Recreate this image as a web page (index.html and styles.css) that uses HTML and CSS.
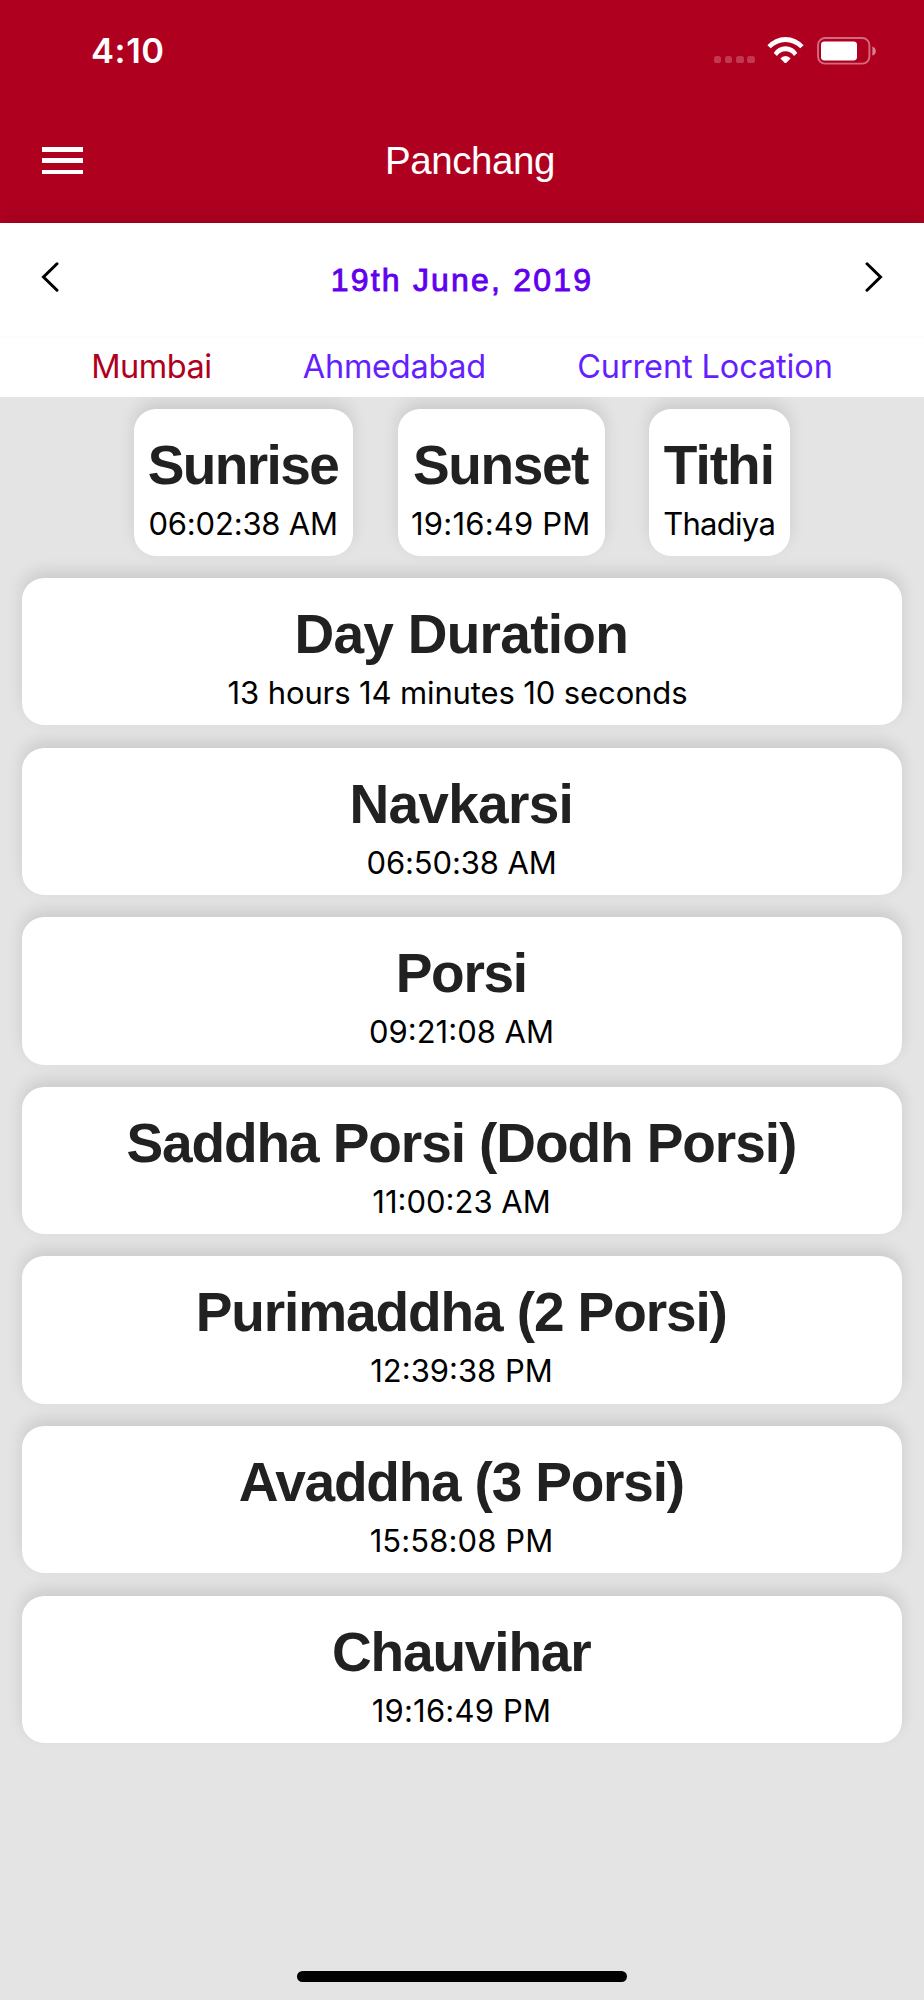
FILE: index.html
```html
<!DOCTYPE html>
<html lang="en">
<head>
<meta charset="utf-8">
<title>Panchang</title>
<link rel="stylesheet" href="styles.css">
</head>
<body>
<div class="screen">
  <header class="top">
    <div class="status">
      <span class="clock">4:10</span>
      <div class="indicators">
        <div class="signal"><i></i><i></i><i></i><i></i></div>
        <svg class="wifi" viewBox="0 0 111 80" fill="#fff">
          <path d="M1 25A72 72 0 0 1 110 25L100 34A61.6 61.6 0 0 0 11 34Z"/>
          <path d="M20 48A41.5 41.5 0 0 1 91 48L81 57A30 30 0 0 0 30 57Z"/>
          <path d="M40 65A19 19 0 0 1 71 65L55.5 80Z"/>
        </svg>
        <svg class="battery" viewBox="0 0 60 28">
          <rect x="1" y="1" width="51.4" height="25.6" rx="7" fill="none" stroke="#fff" stroke-opacity=".42" stroke-width="1.9"/>
          <rect x="4" y="4.4" width="36" height="19" rx="3.4" fill="#fff"/>
          <path d="M55.4 9.4Q58.8 10.4 58.8 14T55.4 18.6Z" fill="#fff" fill-opacity=".5"/>
        </svg>
      </div>
    </div>
    <div class="bar">
      <div class="menu"><i></i><i></i><i></i></div>
      <h1 class="bar-title">Panchang</h1>
    </div>
  </header>
  <div class="date-row">
    <svg class="chevron" viewBox="0 0 18 30"><path d="M16 1.8L2.5 15L16 28.2"/></svg>
    <span class="date">19th June, 2019</span>
    <svg class="chevron" viewBox="0 0 18 30"><path d="M2 1.8L15.5 15L2 28.2"/></svg>
  </div>
  <nav class="tabs">
    <span class="tab active mumbai">Mumbai</span>
    <span class="tab ahmedabad">Ahmedabad</span>
    <span class="tab current">Current Location</span>
  </nav>
  <main class="content">
    <div class="trio">
      <section class="card sunrise"><h2>Sunrise</h2><p>06:02:38 AM</p></section>
      <section class="card sunset"><h2>Sunset</h2><p>19:16:49 PM</p></section>
      <section class="card tithi"><h2>Tithi</h2><p>Thadiya</p></section>
    </div>
    <section class="card duration"><h2>Day Duration</h2><p>13 hours 14 minutes 10 seconds</p></section>
    <section class="card navkarsi"><h2>Navkarsi</h2><p>06:50:38 AM</p></section>
    <section class="card porsi"><h2>Porsi</h2><p>09:21:08 AM</p></section>
    <section class="card saddha"><h2>Saddha Porsi (Dodh Porsi)</h2><p>11:00:23 AM</p></section>
    <section class="card purimaddha"><h2>Purimaddha (2 Porsi)</h2><p>12:39:38 PM</p></section>
    <section class="card avaddha"><h2>Avaddha (3 Porsi)</h2><p>15:58:08 PM</p></section>
    <section class="card chauvihar"><h2>Chauvihar</h2><p>19:16:49 PM</p></section>
    <div class="home"></div>
  </main>
</div>
</body>
</html>
```

FILE: styles.css
```css
* { box-sizing: border-box; }
body { margin: 0; font-family: Inter, sans-serif; color: #000; }
h1, h2, p { margin: 0; }

.screen { width: 924px; height: 2000px; display: flex; flex-direction: column; background: #e4e4e4; overflow: hidden; }

.top { height: 223.3px; background: #b00020; color: #fff; }
.status { height: 100px; display: flex; justify-content: space-between; align-items: flex-start; padding: 30px 47.5px 0 91px; }
.clock { font-size: 34.5px; font-weight: 600; line-height: 42px; letter-spacing: .6px; }
.indicators { display: flex; align-items: flex-start; padding-top: 6.5px; }
.signal { display: flex; gap: 3.6px; padding-top: 19.5px; margin-right: 12.5px; }
.signal i { width: 7.6px; height: 7.4px; border-radius: 2.6px; background: rgba(255, 255, 255, .22); }
.wifi { width: 37px; height: 26.6px; margin-right: 12.3px; }
.battery { width: 60px; height: 28px; }

.bar { height: 123.3px; display: grid; grid-template-columns: 116px 1fr 100px; align-items: start; }
.menu { display: flex; flex-direction: column; gap: 6.7px; padding: 47px 0 0 42.3px; }
.menu i { width: 40.7px; height: 4.6px; background: #fff; }
.bar-title { font: 400 38.5px/44px "Liberation Sans", sans-serif; letter-spacing: -.4px; text-align: center; padding-top: 39px; }

.date-row { position: relative; height: 112.7px; display: flex; justify-content: space-between; align-items: flex-start; padding: 38.5px 41px 0; background: #fff; box-shadow: 0 -7px 16px rgba(0, 0, 0, .11); }
.chevron { width: 18px; height: 30px; fill: none; stroke: #000; stroke-width: 3; stroke-linecap: round; }
.date { font: 400 32px/36px "Liberation Sans", sans-serif; letter-spacing: 2.2px; color: #6200ee; -webkit-text-stroke: .9px #6200ee; }

.tabs { position: relative; z-index: 1; height: 61.3px; display: flex; justify-content: space-evenly; background: #fff; border-top: 2px solid #fcfcfc; }
.tab { font-size: 32.5px; line-height: 40px; padding-top: 9px; color: #651fff; }
.tab.active { color: #b00020; }
.mumbai { letter-spacing: -.5px; }
.ahmedabad { letter-spacing: -.26px; }
.current { letter-spacing: -.12px; }

.content { flex: 1; display: flex; flex-direction: column; gap: 22.4px; padding: 11.3px 22.2px 18px; }
.trio { display: flex; justify-content: center; gap: 44.6px; }
.card { height: 147.2px; flex-shrink: 0; padding-top: 28px; border-radius: 22px; background: #fff; text-align: center; white-space: nowrap; box-shadow: 0 -7px 16px rgba(0, 0, 0, .11); }
.card h2 { font: 700 55px/56px "Liberation Sans", sans-serif; color: #212121; padding-right: 1.5px; }
.card p { font-size: 31px; line-height: 36px; margin-top: 13px; padding-right: 1px; }

.sunrise { width: 219.3px; }
.sunset { width: 206.8px; }
.tithi { width: 140.7px; }
.sunrise h2 { letter-spacing: -1.6px; }
.sunrise p { letter-spacing: -.2px; }
.sunset h2 { letter-spacing: -1.4px; }
.sunset p, .chauvihar p { letter-spacing: .2px; }
.tithi h2 { letter-spacing: -1px; }
.tithi p { letter-spacing: -.7px; }
.duration h2 { letter-spacing: -.72px; }
.duration p { letter-spacing: -.12px; padding-right: 9px; }
.navkarsi h2 { letter-spacing: -.7px; }
.navkarsi p { letter-spacing: -.13px; }
.porsi h2 { letter-spacing: -1.3px; }
.saddha h2 { letter-spacing: -1.08px; }
.purimaddha h2 { letter-spacing: -1.1px; }
.avaddha h2 { letter-spacing: -1.2px; }
.avaddha p { letter-spacing: .1px; }
.chauvihar h2 { letter-spacing: -1.16px; }

.home { width: 330px; height: 11.3px; margin: auto auto 0; border-radius: 6px; background: #000; }
```
